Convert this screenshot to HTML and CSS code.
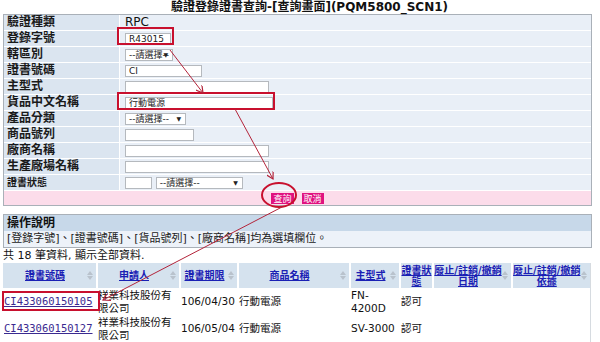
FILE: index.html
```html
<!DOCTYPE html>
<html lang="zh-Hant">
<head>
  <meta charset="UTF-8" />
  <title>驗證登錄證書查詢</title>
  <link rel="stylesheet" href="styles.css">
</head>
<body>
  <h1 class="title">驗證登錄證書查詢-[查詢畫面](PQM5800_SCN1)</h1>

  <table class="query">
    <tr><td class="lbl">驗證種類</td><td class="val">RPC</td></tr>
    <tr><td class="lbl">登錄字號</td><td class="val"><input class="txt w45" value="R43015"></td></tr>
    <tr><td class="lbl">轄區別</td><td class="val"><span class="sel w48">--請選擇--</span></td></tr>
    <tr><td class="lbl">證書號碼</td><td class="val"><input class="txt w77" value="CI"></td></tr>
    <tr><td class="lbl">主型式</td><td class="val"><input class="txt w144"></td></tr>
    <tr><td class="lbl">貨品中文名稱</td><td class="val"><input class="txt w148" value="行動電源"></td></tr>
    <tr><td class="lbl">產品分類</td><td class="val"><span class="sel w61">--請選擇--</span></td></tr>
    <tr><td class="lbl">商品號列</td><td class="val"><input class="txt w69"></td></tr>
    <tr><td class="lbl">廠商名稱</td><td class="val"><input class="txt w144"></td></tr>
    <tr><td class="lbl">生產廠場名稱</td><td class="val"><input class="txt w144"></td></tr>
    <tr><td class="lbl small">證書狀態</td><td class="val"><input class="txt w27"> <span class="sel w87">--請選擇--</span></td></tr>
    <tr class="btn-row">
      <td colspan="2"><button class="pink-btn">查詢</button><button class="pink-btn">取消</button></td>
    </tr>
  </table>

  <table class="help">
    <tr><th>操作說明</th></tr>
    <tr><td>[登錄字號]、[證書號碼]、[貨品號列]、[廠商名稱]均為選填欄位。</td></tr>
  </table>

  <p class="count">共 18 筆資料, 顯示全部資料.</p>

  <table class="result">
    <colgroup>
      <col style="width:94px"><col style="width:83px"><col style="width:58px"><col style="width:112px">
      <col style="width:50px"><col style="width:33px"><col style="width:79px"><col style="width:78px">
    </colgroup>
    <thead>
      <tr>
        <th><div class="th-in"><a href="#">證書號碼</a><span class="sort"></span></div></th>
        <th><div class="th-in"><a href="#">申請人</a><span class="sort"></span></div></th>
        <th><div class="th-in"><a href="#">證書期限</a><span class="sort"></span></div></th>
        <th><div class="th-in"><a href="#">商品名稱</a><span class="sort"></span></div></th>
        <th><div class="th-in"><a href="#">主型式</a><span class="sort"></span></div></th>
        <th><div class="th-in"><a href="#">證書狀態</a></div></th>
        <th><div class="th-in"><a href="#">廢止/註銷/撤銷日期</a><span class="sort"></span></div></th>
        <th><div class="th-in"><a href="#">廢止/註銷/撤銷依據</a><span class="sort"></span></div></th>
      </tr>
    </thead>
    <tbody>
      <tr>
        <td><a class="cert" href="#">CI433060150105</a></td>
        <td>祥業科技股份有限公司</td>
        <td>106/04/30</td>
        <td>行動電源</td>
        <td>FN-4200D</td>
        <td>認可</td>
        <td></td>
        <td></td>
      </tr>
      <tr>
        <td><a class="cert" href="#">CI433060150127</a></td>
        <td>祥業科技股份有限公司</td>
        <td>106/05/04</td>
        <td>行動電源</td>
        <td>SV-3000</td>
        <td>認可</td>
        <td></td>
        <td></td>
      </tr>
    </tbody>
  </table>

  <!-- red annotation marks drawn over the page -->
  <svg class="marks" width="600" height="342" viewBox="0 0 600 342">
    <defs>
      <marker id="head" markerWidth="8" markerHeight="8" refX="7" refY="4" orient="auto" markerUnits="userSpaceOnUse">
        <path d="M0,0 L7,4 L0,8" fill="none" stroke="#b3243a" stroke-width="1.2"/>
      </marker>
    </defs>
    <rect x="118" y="28" width="55" height="16" fill="none" stroke="#c8102e" stroke-width="2"/>
    <rect x="118" y="93" width="156" height="16" fill="none" stroke="#c8102e" stroke-width="2"/>
    <rect x="3" y="292" width="96" height="18" fill="none" stroke="#c8102e" stroke-width="2"/>
    <ellipse cx="279" cy="195" rx="17" ry="12" fill="none" stroke="#c8102e" stroke-width="2"/>
    <line x1="170" y1="50" x2="203" y2="93" stroke="#b3243a" stroke-width="1" marker-end="url(#head)"/>
    <line x1="235" y1="109" x2="273" y2="179" stroke="#b3243a" stroke-width="1" marker-end="url(#head)"/>
    <line x1="282" y1="207" x2="103" y2="300" stroke="#b3243a" stroke-width="1" marker-end="url(#head)"/>
  </svg>
</body>
</html>
```

FILE: styles.css
```css
body {
  margin: 0;
  padding: 0 9px 0 3px;
  background: #ffffff;
  font-family: "DejaVu Sans", "Noto Sans CJK TC", sans-serif;
  font-size: 11px;
  color: #111;
  position: relative;
}

.title {
  margin: 0;
  padding-left: 25px;
  height: 14px;
  font-size: 12px;
  line-height: 14px;
  font-weight: bold;
  text-align: center;
  color: #111;
  white-space: nowrap;
}

/* query form */
.query {
  width: 589px;
  border: 1px solid #a9b0b8;
  border-collapse: separate;
  border-spacing: 0;
}
.query td {
  height: 15px;
  padding: 0;
  border-bottom: 1px solid #ffffff;
  vertical-align: middle;
  line-height: 13px;
}
.query .lbl {
  width: 112px;
  padding-left: 3px;
  background: #dbe5f0;
  font-size: 12px;
  font-weight: bold;
  color: #1a1a1a;
  border-right: 1px solid #ffffff;
}
.query .lbl.small {
  font-size: 10px;
}
.query .val {
  padding-left: 5px;
  background: #e9eff7;
  font-size: 12px;
}
.txt {
  box-sizing: border-box;
  height: 12px;
  margin: 0;
  padding: 0 3px;
  border: 1px solid #b5b9be;
  background: #fff;
  font-family: "DejaVu Sans", "Noto Sans CJK TC", sans-serif;
  font-size: 9px;
  line-height: 10px;
  color: #222;
  vertical-align: middle;
}
.sel {
  box-sizing: border-box;
  display: inline-block;
  position: relative;
  height: 12px;
  padding-left: 3px;
  border: 1px solid #b5b9be;
  background: #fff;
  font-size: 9px;
  line-height: 10px;
  color: #222;
  vertical-align: middle;
}
.sel::after {
  content: "▼";
  position: absolute;
  right: 4px;
  top: 0;
  font-size: 6px;
  line-height: 10px;
  color: #222;
}
.w27 { width: 27px; }
.w45 { width: 46px; }
.w48 { width: 48px; }
.w61 { width: 61px; }
.w69 { width: 69px; }
.w77 { width: 77px; }
.w87 { width: 87px; }
.w144 { width: 144px; }
.w148 { width: 148px; }

.query .btn-row td {
  height: 12px;
  background: #fcdcea;
  text-align: center;
  border-bottom: none;
  padding-bottom: 1px;
}
.pink-btn {
  height: 11px;
  margin: 0 4px;
  padding: 0 2px;
  border: none;
  background: #e0127f;
  color: #fff;
  font-family: "Noto Sans CJK TC", sans-serif;
  font-size: 9px;
  line-height: 11px;
  vertical-align: middle;
}

/* help box */
.help {
  width: 589px;
  margin-top: 8px;
  border: 1px solid #a9b0b8;
  border-collapse: separate;
  border-spacing: 0;
}
.help th {
  height: 16px;
  padding: 0 0 0 3px;
  background: #c7d8e9;
  text-align: left;
  font-size: 12px;
  font-weight: bold;
  line-height: 14px;
}
.help td {
  height: 16px;
  padding: 0 0 0 3px;
  background: #edf2f9;
  font-size: 11px;
  line-height: 14px;
  color: #222;
}

.count {
  margin: 1px 0 0;
  height: 14px;
  font-size: 11px;
  line-height: 14px;
}

/* result list */
.result {
  width: 587px;
  margin-top: 0;
  table-layout: fixed;
  border-collapse: collapse;
  border-right: 1px solid #d6dbe0;
}
.result th {
  height: 25px;
  padding: 0;
  background: #d5e2ee;
  border-right: 2px solid #ffffff;
  font-size: 10px;
  font-weight: bold;
  line-height: 11px;
  vertical-align: middle;
}
.result th:last-child {
  border-right: none;
}
.th-in {
  display: flex;
  align-items: center;
}
.th-in a {
  flex: 1;
  text-align: center;
  color: #1a20b4;
  text-decoration: underline;
}
.sort {
  display: inline-flex;
  flex-direction: column;
  gap: 1px;
  width: 7px;
  margin-right: 2px;
}
.sort::before,
.sort::after {
  content: "";
  width: 0;
  height: 0;
  border-left: 3px solid transparent;
  border-right: 3px solid transparent;
}
.sort::before {
  border-bottom: 4px solid #b9c2cc;
}
.sort::after {
  border-top: 4px solid #b9c2cc;
}
.result td {
  height: 27px;
  padding: 0 1px;
  font-size: 10.5px;
  line-height: 13px;
  vertical-align: middle;
  color: #111;
}
.cert {
  font-family: "DejaVu Sans Mono", monospace;
  font-size: 10.5px;
  color: #3a2a90;
  text-decoration: underline;
}

/* annotation overlay */
.marks {
  position: absolute;
  left: 0;
  top: 0;
  pointer-events: none;
}
```
